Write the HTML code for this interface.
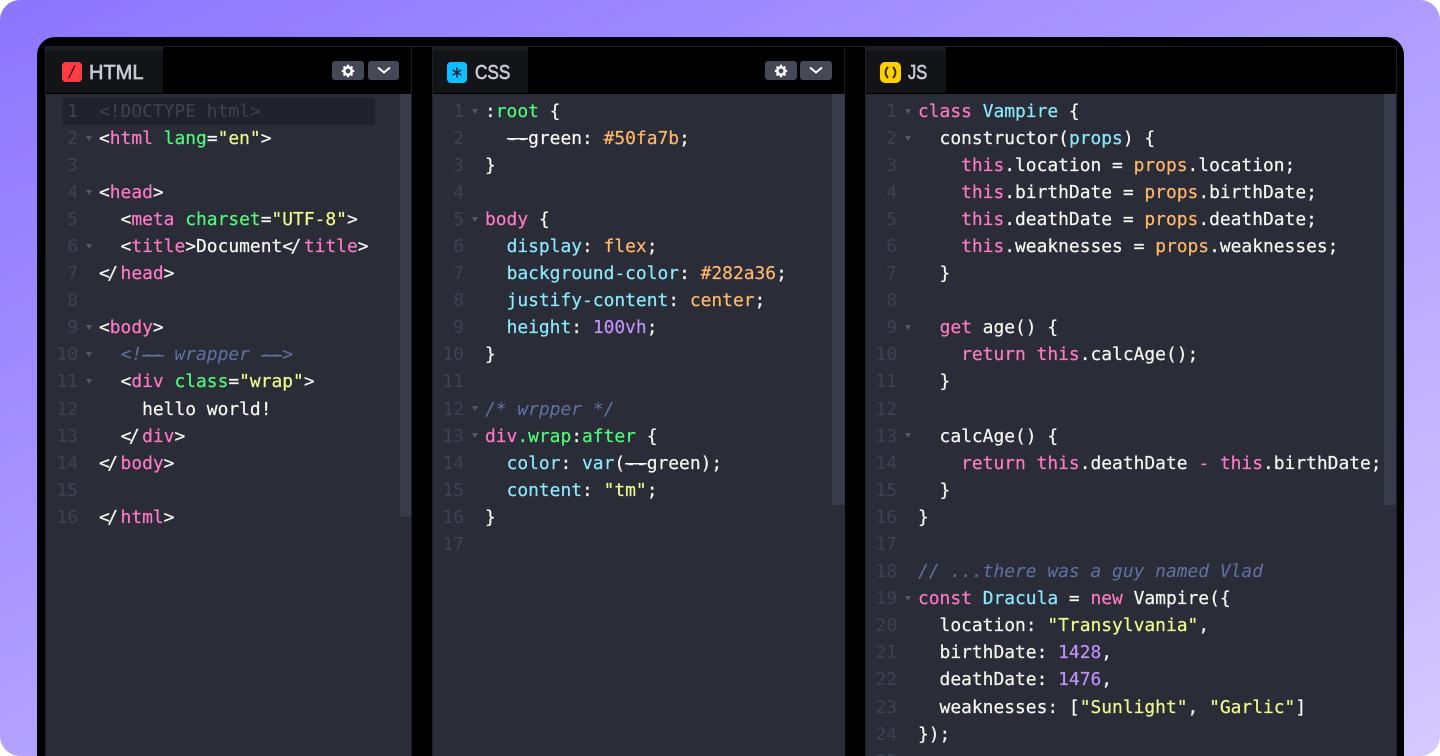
<!DOCTYPE html>
<html lang="en"><head><meta charset="utf-8"><title>Editor</title>
<style>
html,body{margin:0;padding:0;background:#fff;overflow:hidden;width:1440px;height:756px;}
#s{position:relative;width:1440px;height:756px;overflow:hidden;background:#fff;}
#bg{position:absolute;left:0;top:0;width:1440px;height:756px;border-radius:20px;background:linear-gradient(155deg,#8c75ff 0%,#d4c9ff 100%);}
#f{position:absolute;left:37px;top:37px;width:1367px;height:719px;background:#000;border-radius:18px 18px 0 0;}
.a{position:absolute;}
.p{position:absolute;top:46px;height:710px;background:#000;box-shadow:inset -1px 0 0 #1e1f26,inset 1px 0 0 #1e1f26;}
.c{position:absolute;top:94px;height:662px;background:#2a2c37;}
.sb{position:absolute;top:94px;background:#383c4a;}
.t{position:absolute;top:47px;height:46px;background:#131417;box-shadow:inset 0 3px 0 #1e1f26;}
.tl{position:absolute;top:60px;font:normal 20px/26px "Liberation Sans",sans-serif;-webkit-text-stroke:.65px #c7c9d3;color:#c7c9d3;transform-origin:0 50%;white-space:nowrap;}
.b{position:absolute;top:61px;height:19px;background:#444857;border-radius:3px;}
pre{position:absolute;margin:0;top:97.5px;height:658px;overflow:hidden;font-family:"DejaVu Sans Mono","Liberation Mono",monospace;font-size:17.92px;line-height:27.1px;color:#f8f8f2;font-variant-ligatures:none;-webkit-text-stroke:.2px;}
pre.n{color:#3e4252;text-align:right;width:40px;-webkit-text-stroke:0;}
.f{position:absolute;width:0;height:0;border-left:3.5px solid transparent;border-right:3.5px solid transparent;border-top:5px solid #565a68;}
i{font-style:normal}
.k{color:#ff79c6}.g{color:#50fa7b}.y{color:#f1fa8c}.q{color:#8be9fd}.v{color:#bd93f9}.o{color:#ffb86c}
.m{color:#6272a4;font-style:italic;-webkit-text-stroke:0}.d{color:#3e4252;-webkit-text-stroke:0}
.s{display:inline-block;width:2ch;letter-spacing:-2.5px;text-indent:0;line-height:1;}
.l{background:linear-gradient(#f8f8f2,#f8f8f2) center 55%/100% 1.5px no-repeat;}
.lm{background:linear-gradient(#6272a4,#6272a4) center 55%/100% 1.5px no-repeat;}
</style></head><body><div id="s">
<div id="bg"></div>
<div id="f"></div>

<div class="p" style="left:45px;width:367px"></div>
<div class="p" style="left:432px;width:413px"></div>
<div class="p" style="left:865px;width:532px"></div>
<div class="a" style="left:45px;top:46px;width:1352px;height:1px;background:#1e1f26"></div>

<div class="c" style="left:46px;width:365px"></div>
<div class="c" style="left:433px;width:412px"></div>
<div class="c" style="left:866px;width:530px"></div>

<div class="sb" style="left:400px;width:11px;height:423px"></div>
<div class="sb" style="left:832px;width:13px;height:411px"></div>
<div class="sb" style="left:1384px;width:12px;height:411px"></div>

<div class="a" style="left:63px;top:98px;width:312px;height:27px;background:#21222c"></div>

<div class="t" style="left:46px;width:117px"></div>
<div class="t" style="left:433px;width:95px"></div>
<div class="t" style="left:866px;width:80px"></div>

<div class="a" style="left:62px;top:62px;width:20px;height:20px;background:#ff3c41;border-radius:4px"></div>
<svg class="a" style="left:62px;top:62px" width="20" height="20"><path d="M6.500 16.500L13 3.500" stroke="#2a1a20" stroke-width="1.300" fill="none"/></svg>
<div class="tl" style="left:89px">HTML</div>

<div class="a" style="left:447px;top:62px;width:20px;height:21px;background:#0ebeff;border-radius:4px"></div>
<svg class="a" style="left:447px;top:62px" width="20" height="21"><path d="M10 5.500v10M5.700 8l8.600 5M14.300 8l-8.600 5" stroke="#0b2a3a" stroke-width="1.500" fill="none"/></svg>
<div class="tl" style="left:475px;transform:scaleX(.86)">CSS</div>

<div class="a" style="left:880px;top:62px;width:21px;height:21px;background:#fcd000;border-radius:5px"></div>
<svg class="a" style="left:880px;top:62px" width="21" height="21"><path d="M8 5C4.800 8.500 4.800 12.500 8 16M13 5C16.200 8.500 16.200 12.500 13 16" stroke="#2a2410" stroke-width="2" fill="none"/></svg>
<div class="tl" style="left:908px;transform:scaleX(.82)">JS</div>

<div class="b" style="left:332px;width:32px"></div>
<div class="b" style="left:368px;width:31px"></div>
<svg class="a" style="left:341px;top:64px" width="14" height="14" viewBox="0 0 14 14"><circle cx="7" cy="7" r="3.700" fill="none" stroke="#fff" stroke-width="2.600"/><path d="M7 .8v2.400M7 10.800v2.400M.8 7h2.400M10.800 7h2.400M2.600 2.600l1.700 1.700M9.700 9.700l1.700 1.700M11.400 2.600L9.700 4.300M4.300 9.700l-1.700 1.700" stroke="#fff" stroke-width="2.200"/></svg>
<svg class="a" style="left:376px;top:66px" width="16" height="9"><path d="M2 1.500l6 5 6-5" stroke="#fff" stroke-width="2" fill="none"/></svg>

<div class="b" style="left:765px;width:32px"></div>
<div class="b" style="left:800px;width:32px"></div>
<svg class="a" style="left:774px;top:64px" width="14" height="14" viewBox="0 0 14 14"><circle cx="7" cy="7" r="3.700" fill="none" stroke="#fff" stroke-width="2.600"/><path d="M7 .8v2.400M7 10.800v2.400M.8 7h2.400M10.800 7h2.400M2.600 2.600l1.700 1.700M9.700 9.700l1.700 1.700M11.400 2.600L9.700 4.300M4.300 9.700l-1.700 1.700" stroke="#fff" stroke-width="2.200"/></svg>
<svg class="a" style="left:808px;top:66px" width="16" height="9"><path d="M2 1.500l6 5 6-5" stroke="#fff" stroke-width="2" fill="none"/></svg>

<!-- fold markers -->
<div class="f" style="left:86px;top:136px"></div>
<div class="f" style="left:86px;top:190px"></div>
<div class="f" style="left:86px;top:244px"></div>
<div class="f" style="left:86px;top:325px"></div>
<div class="f" style="left:86px;top:352px"></div>
<div class="f" style="left:86px;top:379px"></div>
<div class="f" style="left:472px;top:109px"></div>
<div class="f" style="left:472px;top:217px"></div>
<div class="f" style="left:472px;top:406px"></div>
<div class="f" style="left:472px;top:433px"></div>
<div class="f" style="left:905px;top:109px"></div>
<div class="f" style="left:905px;top:136px"></div>
<div class="f" style="left:905px;top:325px"></div>
<div class="f" style="left:905px;top:433px"></div>
<div class="f" style="left:905px;top:596px"></div>

<pre class="n" style="left:38px">1
2
3
4
5
6
7
8
9
10
11
12
13
14
15
16</pre>
<pre style="left:99px"><i class="d">&lt;!DOCTYPE html&gt;</i>
&lt;<i class="k">html</i> <i class="g">lang</i>=<i class="y">"en"</i>&gt;

&lt;<i class="k">head</i>&gt;
  &lt;<i class="k">meta</i> <i class="g">charset</i>=<i class="y">"UTF-8"</i>&gt;
  &lt;<i class="k">title</i>&gt;Document<i class="s">&lt;/</i><i class="k">title</i>&gt;
<i class="s">&lt;/</i><i class="k">head</i>&gt;

&lt;<i class="k">body</i>&gt;
  <i class="m">&lt;!<i class="lm">--</i> wrapper <i class="lm">--</i>&gt;</i>
  &lt;<i class="k">div</i> <i class="g">class</i>=<i class="y">"wrap"</i>&gt;
    hello world!
  <i class="s">&lt;/</i><i class="k">div</i>&gt;
<i class="s">&lt;/</i><i class="k">body</i>&gt;

<i class="s">&lt;/</i><i class="k">html</i>&gt;</pre>

<pre class="n" style="left:424px">1
2
3
4
5
6
7
8
9
10
11
12
13
14
15
16
17</pre>
<pre style="left:485px">:<i class="g">root</i> {
  <i class="l">--</i>green: <i class="o">#50fa7b</i>;
}

<i class="k">body</i> {
  <i class="q">display</i>: <i class="o">flex</i>;
  <i class="q">background-color</i>: <i class="o">#282a36</i>;
  <i class="q">justify-content</i>: <i class="o">center</i>;
  <i class="q">height</i>: <i class="v">100vh</i>;
}

<i class="m">/* wrpper */</i>
<i class="k">div</i><i class="g">.wrap</i>:<i class="g">after</i> {
  <i class="q">color</i>: <i class="q">var</i>(<i class="l">--</i>green);
  <i class="q">content</i>: <i class="y">"tm"</i>;
}</pre>

<pre class="n" style="left:857px">1
2
3
4
5
6
7
8
9
10
11
12
13
14
15
16
17
18
19
20
21
22
23
24
25</pre>
<pre style="left:918px"><i class="k">class</i> <i class="q">Vampire</i> {
  constructor(<i class="q">props</i>) {
    <i class="k">this</i>.location = <i class="o">props</i>.location;
    <i class="k">this</i>.birthDate = <i class="o">props</i>.birthDate;
    <i class="k">this</i>.deathDate = <i class="o">props</i>.deathDate;
    <i class="k">this</i>.weaknesses = <i class="o">props</i>.weaknesses;
  }

  <i class="k">get</i> age() {
    <i class="k">return</i> <i class="k">this</i>.calcAge();
  }

  calcAge() {
    <i class="k">return</i> <i class="k">this</i>.deathDate <i class="k">-</i> <i class="k">this</i>.birthDate;
  }
}

<i class="m">// ...there was a guy named Vlad</i>
<i class="k">const</i> <i class="q">Dracula</i> = <i class="k">new</i> Vampire({
  location: <i class="y">"Transylvania"</i>,
  birthDate: <i class="v">1428</i>,
  deathDate: <i class="v">1476</i>,
  weaknesses: [<i class="y">"Sunlight"</i>, <i class="y">"Garlic"</i>]
});</pre>
</div></body></html>
